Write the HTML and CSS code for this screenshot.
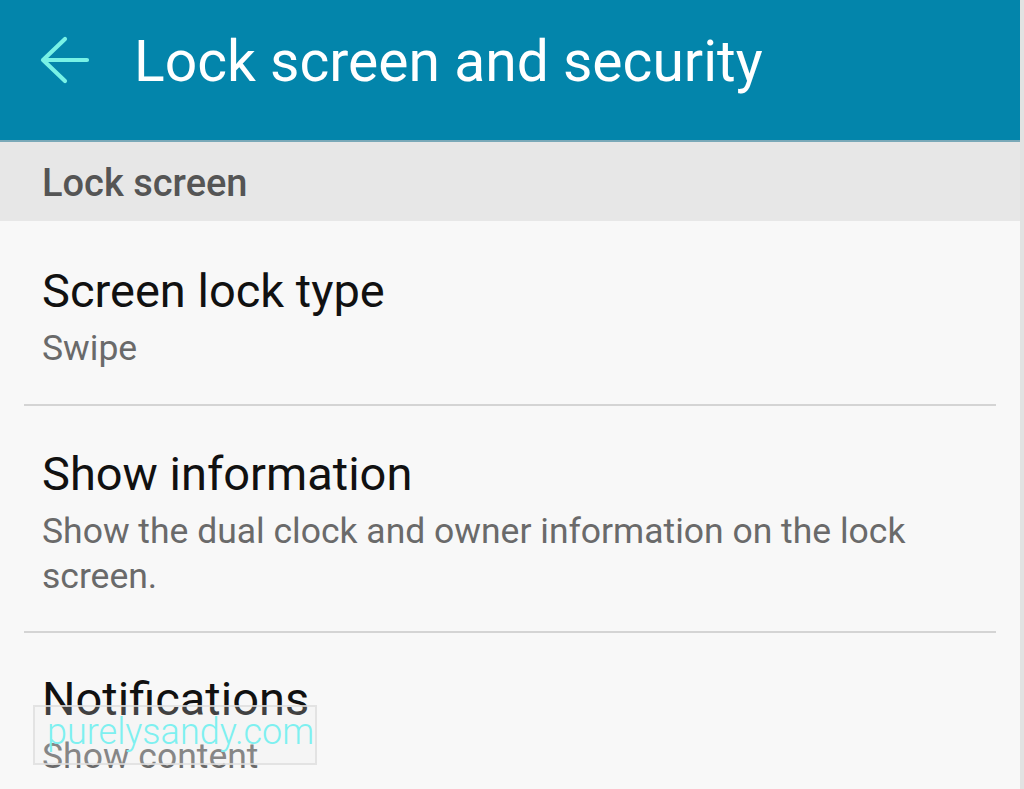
FILE: index.html
```html
<!DOCTYPE html>
<html>
<head>
<meta charset="utf-8">
<link rel="stylesheet" href="styles.css">
</head>
<body>
<div class="app">
  <header class="appbar">
    <svg class="back" width="56" height="50" viewBox="0 0 56 50"><path d="M51 25H7M29 4L7 25L29 46" fill="none" stroke="#78f2e6" stroke-width="4.2" stroke-linecap="round" stroke-linejoin="round"/></svg>
    <h1 class="title">Lock screen and security</h1>
  </header>
  <div class="section">Lock screen</div>
  <div class="list">
    <div class="item first">
      <div class="primary">Screen lock type</div>
      <div class="secondary">Swipe</div>
    </div>
    <div class="divider"></div>
    <div class="item second">
      <div class="primary">Show information</div>
      <div class="secondary">Show the dual clock and owner information on the lock screen.</div>
    </div>
    <div class="divider"></div>
    <div class="item third">
      <div class="primary">Notifications</div>
      <div class="secondary">Show content</div>
      <div class="watermark">purelysandy.com</div>
    </div>
  </div>
</div>
</body>
</html>
```
FILE: styles.css
```css
html, body { margin: 0; padding: 0; }
body { background: #f8f8f8; font-family: Roboto, "Noto Sans", sans-serif; width: 1024px; height: 789px; overflow: hidden; }
.app { width: 1020px; border-right: 4px solid #e2e2e2; min-height: 789px; background: #f8f8f8; }
.appbar { height: 142px; background: #0385ab; display: flex; align-items: flex-start; box-sizing: border-box; padding: 33px 0 0 36px; border-bottom: 2px solid #7aa9b8; }
.back { display: block; margin: 2px 42px 0 0; flex: none; }
.title { margin: 0; font-weight: 400; font-size: 57px; line-height: 1; color: #fff; }
.section { height: 79px; background: #e7e7e7; box-sizing: border-box; padding-left: 42px; padding-top: 19px; font-size: 38px; line-height: 44px; font-weight: 500; color: #555; }
.list { padding: 0 24px; }
.item { padding: 0 18px; position: relative; box-sizing: border-box; }
.first { padding-top: 42px; height: 183px; }
.second { padding-top: 40px; height: 225px; }
.third { padding-top: 38px; height: 160px; }
.primary { font-size: 47px; color: #111; line-height: 56px; }
.secondary { font-size: 35.5px; color: #6a6a6a; line-height: 45px; margin-top: 7px; padding-right: 40px; }
.divider { height: 2px; background: #d4d4d4; }
.watermark { position: absolute; left: 9px; top: 72px; width: 284px; height: 60px; box-sizing: border-box; background: rgba(236,236,236,0.22); border: 2px solid rgba(222,222,222,0.8); color: #7ef0f0; font-size: 36px; line-height: 50px; padding-left: 12px; font-weight: 300; white-space: nowrap; }
```
